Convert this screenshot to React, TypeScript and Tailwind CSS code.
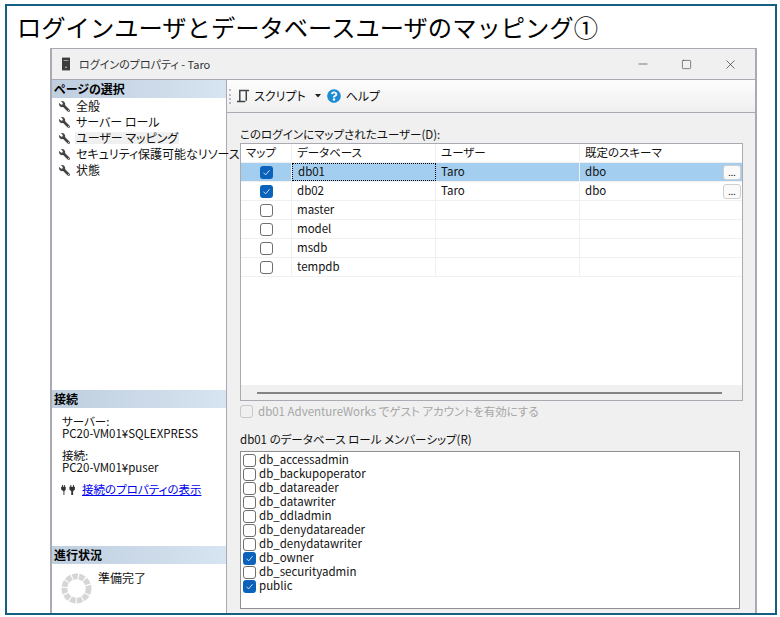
import { FaWrench, FaQuestionCircle } from "react-icons/fa";
import { Minus, Square, X } from "lucide-react";

const font = "[font-family:'Noto_Sans_CJK_JP','Noto_Sans',sans-serif]";

function Check({ on, size = "w-[13px] h-[13px]" }: { on: boolean; size?: string }) {
  return on ? (
    <span className={`${size} shrink-0 rounded-[3px] bg-[#0a62ba] flex items-center justify-center`}>
      <svg viewBox="0 0 12 12" className="w-[9px] h-[9px]" fill="none" stroke="#dbe9f8" strokeWidth="1.2">
        <path d="M2 6.5 L5 9 L10 3" />
      </svg>
    </span>
  ) : (
    <span className={`${size} shrink-0 rounded-[3px] border border-[#6f6f6f] bg-white`} />
  );
}

function SectionHead({ children }: { children: string }) {
  return (
    <div className="h-[18px] pl-[2px] flex items-center bg-gradient-to-r from-[#bfcfdf] to-[#d7e4f1] text-[12px] font-bold text-black leading-none">
      {children}
    </div>
  );
}

const pages = ["全般", "サーバー ロール", "ユーザー マッピング", "セキュリティ保護可能なリソース", "状態"];
const rows = [
  { on: true, db: "db01", user: "Taro", schema: "dbo", sel: true },
  { on: true, db: "db02", user: "Taro", schema: "dbo" },
  { on: false, db: "master" },
  { on: false, db: "model" },
  { on: false, db: "msdb" },
  { on: false, db: "tempdb" },
];
const roles: [string, boolean][] = [
  ["db_accessadmin", false],
  ["db_backupoperator", false],
  ["db_datareader", false],
  ["db_datawriter", false],
  ["db_ddladmin", false],
  ["db_denydatareader", false],
  ["db_denydatawriter", false],
  ["db_owner", true],
  ["db_securityadmin", false],
  ["public", true],
];

export default function App() {
  return (
    <div className={`w-[780px] h-[617px] bg-white overflow-hidden pl-[5px] pt-[4px] ${font} [font-feature-settings:'palt'] text-[#111]`}>
      <div className="w-[772px] h-[611px] border-2 border-[#156082] flex flex-col pl-[43px] pr-[18px] overflow-hidden">
        <div className="h-[42px] -ml-[33px] flex items-center text-[24.3px] leading-none text-black whitespace-nowrap [font-feature-settings:normal]">
          ログインユーザとデータベースユーザのマッピング①
        </div>
        <div className="flex-1 min-h-0 flex flex-col border-l-2 border-r-2 border-t border-[#a9aab2] bg-[#f0f0f0]">
          <div className="h-[30px] shrink-0 flex items-center text-[11px] pl-[10px]">
            <svg viewBox="0 0 10 16" className="w-[8px] h-[14px] mr-[9px]">
              <rect width="10" height="16" fill="#3d3d3d" />
              <rect x="2" y="3" width="6" height="1" fill="#bbb" />
              <circle cx="5" cy="12" r="1" fill="#ddd" />
            </svg>
            <span className="text-[#333]">ログインのプロパティ - Taro</span>
            <div className="ml-auto flex items-center gap-[31px] pr-[17px] text-[#222]">
              <Minus size={14} strokeWidth={1} />
              <Square size={11} strokeWidth={1.2} />
              <X size={15} strokeWidth={1} />
            </div>
          </div>
          <div className="flex-1 min-h-0 flex border-t border-[#a9aab2]">
            <div className="w-[175px] shrink-0 bg-white border-r border-[#a9aab2] flex flex-col text-[12px]">
              <SectionHead>ページの選択</SectionHead>
              <div className="h-[292px] shrink-0 flex flex-col">
                {pages.map((p, i) => (
                  <div key={p} className="h-[16px] flex items-center pl-[7px] gap-[6px] leading-none whitespace-nowrap">
                    <FaWrench size={11} className="text-[#444] -scale-x-100 shrink-0" />
                    <span className={i === 2 ? "bg-[#f0f0f0] px-[1px] -mx-[1px]" : ""}>{p}</span>
                  </div>
                ))}
              </div>
              <SectionHead>接続</SectionHead>
              <div className="h-[138px] shrink-0 pl-[10px] pt-[7px] text-[11.5px] leading-[12px]">
                <div>サーバー:</div>
                <div>PC20-VM01¥SQLEXPRESS</div>
                <div className="mt-[10px]">接続:</div>
                <div>PC20-VM01¥puser</div>
                <div className="mt-[10px] -ml-[1px] flex items-center gap-[6px]">
                  <svg viewBox="0 0 16 12" className="w-[15px] h-[11px] text-[#333]" fill="currentColor">
                    <path d="M1 1h1v2h1V1h1v2h1v3L3.5 8v4h-1V8L0 6V3h1zM10 1h1v2h2V1h1v2h1v3l-2 2v4h-2V8L9 6V3h1z" />
                  </svg>
                  <span className="text-[#0000ee] underline">接続のプロパティの表示</span>
                </div>
              </div>
              <SectionHead>進行状況</SectionHead>
              <div className="flex-1 pl-[9px] pt-[7px] flex items-start gap-[6px]">
                <svg viewBox="0 0 32 32" className="w-[31px] h-[31px] mt-[2px]">
                  <circle cx="16" cy="16" r="12.5" fill="none" stroke="#d6d6d6" strokeWidth="6" strokeDasharray="5.6 1.2" />
                </svg>
                <span className="text-[12px] leading-[14px]">準備完了</span>
              </div>
            </div>
            <div className="flex-1 min-w-0 flex flex-col">
              <div className="h-[33px] shrink-0 border-b border-[#a9aab2] bg-gradient-to-b from-[#fdfdfd] to-[#efefef] flex items-center text-[12px] pl-[2px]">
                <span className="w-[2px] h-[15px] border-l-2 border-dotted border-[#bbb] mr-[6px]" />
                <svg viewBox="0 0 14 14" className="w-[13px] h-[14px] mr-[4px]" fill="none" stroke="#444" strokeWidth="1.6">
                  <path d="M0 13H9 M3 12V1H13 M10 1V12" />
                </svg>
                <span>スクリプト</span>
                <svg viewBox="0 0 6 4" className="w-[6px] h-[4px] ml-[9px] mr-[6px]"><path d="M0 0H6L3 3.5Z" fill="#222" /></svg>
                <FaQuestionCircle size={14} className="text-[#1b8bd6] mr-[5px]" />
                <span>ヘルプ</span>
              </div>
              <div className="flex-1 min-h-0 pl-[13px] pr-[12px] pt-[13px] text-[11.5px]">
                <div className="h-[17px] leading-[17px]">このログインにマップされたユーザー(D):</div>
                <div className="h-[258px] border border-[#a9aab2] bg-white flex flex-col">
                  <div className="h-[19px] shrink-0 flex items-center leading-none border-b border-[#f0f0f0]">
                    <div className="w-[51px] h-full pl-[5px] flex items-center border-r border-[#f0f0f0]">マップ</div>
                    <div className="w-[144px] h-full pl-[5px] flex items-center border-r border-[#f0f0f0]">データベース</div>
                    <div className="w-[144px] h-full pl-[5px] flex items-center border-r border-[#f0f0f0]">ユーザー</div>
                    <div className="flex-1 pl-[5px]">既定のスキーマ</div>
                  </div>
                  {rows.map((r) => (
                    <div key={r.db} className={`h-[19px] shrink-0 flex items-center leading-none border-b border-[#f0f0f0] ${r.sel ? "bg-[#a3cef0]" : ""}`}>
                      <div className="w-[51px] h-full flex items-center justify-center border-r border-[#f0f0f0]">
                        <Check on={r.on} />
                      </div>
                      <div className={`w-[144px] h-full pl-[5px] flex items-center ${r.sel ? "border border-dotted border-black" : "border-r border-[#f0f0f0]"}`}>{r.db}</div>
                      <div className="w-[144px] h-full pl-[5px] flex items-center border-r border-[#f0f0f0]">{r.user}</div>
                      <div className="flex-1 h-full pl-[5px] pr-[1px] flex items-center justify-between">
                        <span>{r.schema}</span>
                        {r.schema && (
                          <span className="w-[18px] h-[15px] rounded-[3px] border border-[#cfcfcf] bg-[#fafafa] text-[9px] flex items-center justify-center">...</span>
                        )}
                      </div>
                    </div>
                  ))}
                  <div className="mt-auto h-[15px] bg-[#f0f0f0] flex items-center pl-[16px] pr-[20px]">
                    <div className="w-full h-[2px] bg-[#858585]" />
                  </div>
                </div>
                <div className="h-[21px] flex items-center gap-[5px] text-[#a6a6a6]">
                  <span className="w-[13px] h-[13px] rounded-[3px] border border-[#c8c8c8] shrink-0" />
                  <span>db01 AdventureWorks でゲスト アカウントを有効にする</span>
                </div>
                <div className="h-[29px] flex items-end pb-[6px] leading-none">db01 のデータベース ロール メンバーシップ(R)</div>
                <div className="w-[500px] h-[158px] border border-[#8f8f8f] bg-white pl-[2px] pt-[1px] flex flex-col">
                  {roles.map(([n, on]) => (
                    <div key={n} className="h-[14px] shrink-0 flex items-center gap-[3px] leading-none">
                      <Check on={on} />
                      <span>{n}</span>
                    </div>
                  ))}
                </div>
              </div>
            </div>
          </div>
        </div>
      </div>
    </div>
  );
}
